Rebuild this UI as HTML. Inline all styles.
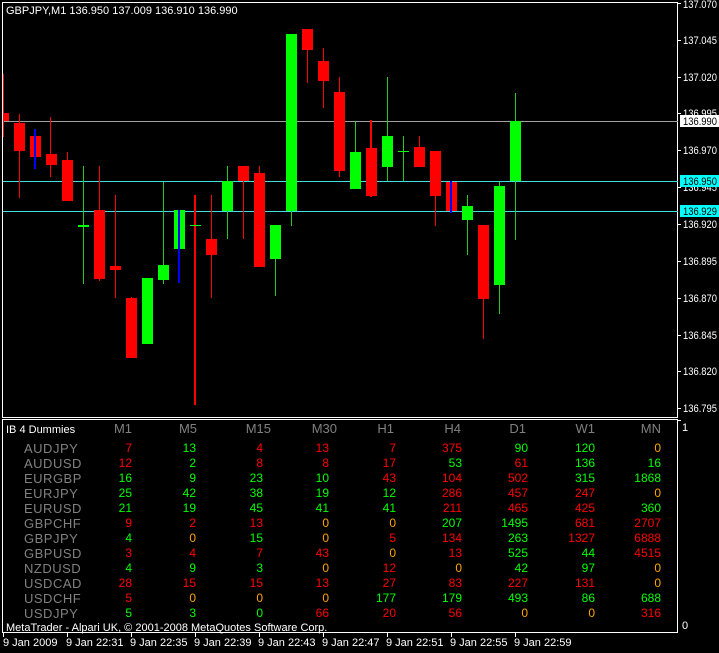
<!DOCTYPE html>
<html><head><meta charset="utf-8"><style>
html,body{margin:0;padding:0;background:#000;width:719px;height:653px;overflow:hidden}
svg{display:block}
text{font-family:"Liberation Sans",sans-serif}
</style></head><body>
<svg width="719" height="653" viewBox="0 0 719 653" xmlns="http://www.w3.org/2000/svg" shape-rendering="crispEdges">
<rect width="719" height="653" fill="#000"/>
<rect x="2.5" y="2.5" width="675" height="415" fill="none" stroke="#fff" stroke-width="1"/>
<rect x="2.5" y="419.5" width="675" height="213" fill="none" stroke="#fff" stroke-width="1"/>
<line x1="3" y1="121.5" x2="678" y2="121.5" stroke="#a0a0a0"/>
<line x1="3" y1="181.5" x2="678" y2="181.5" stroke="#40e0e0"/>
<line x1="3" y1="211.5" x2="678" y2="211.5" stroke="#40e0e0"/>
<g fill="#ff0000">
<rect x="3" y="74" width="1" height="63"/>
<rect x="19" y="114" width="1" height="84"/>
<rect x="50" y="117" width="1" height="60"/>
<rect x="67" y="152" width="1" height="48"/>
<rect x="99" y="166" width="1" height="115"/>
<rect x="115" y="195" width="1" height="103"/>
<rect x="131" y="297" width="1" height="2"/>
<rect x="194" y="195" width="2" height="210"/>
<rect x="211" y="195" width="1" height="103"/>
<rect x="243" y="181" width="1" height="58"/>
<rect x="259" y="166" width="1" height="101"/>
<rect x="307" y="50" width="1" height="33"/>
<rect x="323" y="48" width="1" height="60"/>
<rect x="339" y="77" width="1" height="100"/>
<rect x="370" y="120" width="2" height="77"/>
<rect x="419" y="136" width="1" height="11"/>
<rect x="435" y="196" width="1" height="30"/>
<rect x="483" y="299" width="1" height="40"/>
</g>
<g fill="#22cc22">
<rect x="83" y="166" width="1" height="118"/>
<rect x="163" y="182" width="1" height="102"/>
<rect x="227" y="166" width="1" height="73"/>
<rect x="275" y="259" width="1" height="37"/>
<rect x="291" y="211" width="1" height="15"/>
<rect x="355" y="121" width="1" height="31"/>
<rect x="387" y="77" width="1" height="104"/>
<rect x="403" y="136" width="1" height="45"/>
<rect x="467" y="195" width="1" height="60"/>
<rect x="499" y="182" width="1" height="132"/>
<rect x="515" y="93" width="1" height="147"/>
</g>
<g fill="#ff0000">
<rect x="3" y="113" width="6" height="8"/>
<rect x="14" y="123" width="11" height="28"/>
<rect x="30" y="136" width="11" height="21"/>
<rect x="46" y="154" width="11" height="11"/>
<rect x="62" y="160" width="11" height="41"/>
<rect x="94" y="210" width="11" height="69"/>
<rect x="110" y="266" width="11" height="4"/>
<rect x="126" y="298" width="11" height="60"/>
<rect x="206" y="239" width="11" height="16"/>
<rect x="238" y="166" width="11" height="15"/>
<rect x="254" y="173" width="11" height="94"/>
<rect x="302" y="29" width="11" height="21"/>
<rect x="318" y="61" width="11" height="20"/>
<rect x="334" y="92" width="11" height="79"/>
<rect x="366" y="148" width="11" height="48"/>
<rect x="414" y="147" width="11" height="20"/>
<rect x="430" y="151" width="11" height="45"/>
<rect x="446" y="182" width="11" height="29"/>
<rect x="478" y="225" width="11" height="74"/>
</g>
<g fill="#00ff00">
<rect x="78" y="225" width="11" height="2"/>
<rect x="142" y="278" width="11" height="66"/>
<rect x="158" y="265" width="11" height="15"/>
<rect x="174" y="210" width="11" height="39"/>
<rect x="190" y="225" width="11" height="1"/>
<rect x="222" y="181" width="11" height="30"/>
<rect x="270" y="225" width="11" height="34"/>
<rect x="286" y="34" width="11" height="177"/>
<rect x="350" y="152" width="11" height="37"/>
<rect x="382" y="136" width="11" height="31"/>
<rect x="398" y="151" width="11" height="1"/>
<rect x="462" y="206" width="11" height="14"/>
<rect x="494" y="186" width="11" height="99"/>
<rect x="510" y="121" width="11" height="60"/>
</g>
<g fill="#0000ff">
<rect x="34" y="129" width="2" height="40"/>
<rect x="178" y="210" width="2" height="73"/>
<rect x="450" y="181" width="2" height="32"/>
</g>
<text x="6" y="14" fill="#fff" font-size="11">GBPJPY,M1  136.950 137.009 136.910 136.990</text>
<g fill="#fff" font-size="11">
<rect x="678" y="3" width="3" height="1"/><text x="683" y="8" textLength="34" lengthAdjust="spacingAndGlyphs">137.070</text>
<rect x="678" y="40" width="3" height="1"/><text x="683" y="44" textLength="34" lengthAdjust="spacingAndGlyphs">137.045</text>
<rect x="678" y="77" width="3" height="1"/><text x="683" y="81" textLength="34" lengthAdjust="spacingAndGlyphs">137.020</text>
<rect x="678" y="113" width="3" height="1"/><text x="683" y="117" textLength="34" lengthAdjust="spacingAndGlyphs">136.995</text>
<rect x="678" y="150" width="3" height="1"/><text x="683" y="154" textLength="34" lengthAdjust="spacingAndGlyphs">136.970</text>
<rect x="678" y="187" width="3" height="1"/><text x="683" y="191" textLength="34" lengthAdjust="spacingAndGlyphs">136.945</text>
<rect x="678" y="224" width="3" height="1"/><text x="683" y="228" textLength="34" lengthAdjust="spacingAndGlyphs">136.920</text>
<rect x="678" y="261" width="3" height="1"/><text x="683" y="265" textLength="34" lengthAdjust="spacingAndGlyphs">136.895</text>
<rect x="678" y="298" width="3" height="1"/><text x="683" y="302" textLength="34" lengthAdjust="spacingAndGlyphs">136.870</text>
<rect x="678" y="335" width="3" height="1"/><text x="683" y="339" textLength="34" lengthAdjust="spacingAndGlyphs">136.845</text>
<rect x="678" y="371" width="3" height="1"/><text x="683" y="375" textLength="34" lengthAdjust="spacingAndGlyphs">136.820</text>
<rect x="678" y="408" width="3" height="1"/><text x="683" y="412" textLength="34" lengthAdjust="spacingAndGlyphs">136.795</text>
</g>
<rect x="680" y="115" width="39" height="12" fill="#fff"/><text x="683" y="125" fill="#000" font-size="11" textLength="34" lengthAdjust="spacingAndGlyphs">136.990</text>
<rect x="680" y="175" width="39" height="12" fill="#00ffff"/><text x="683" y="185" fill="#000" font-size="11" textLength="34" lengthAdjust="spacingAndGlyphs">136.950</text>
<rect x="680" y="205" width="39" height="12" fill="#00ffff"/><text x="683" y="215" fill="#000" font-size="11" textLength="34" lengthAdjust="spacingAndGlyphs">136.929</text>
<text x="682" y="431" fill="#fff" font-size="11">1</text>
<text x="682" y="629" fill="#fff" font-size="11">0</text>
<rect x="678" y="420" width="3" height="1" fill="#fff"/>
<text x="6" y="433" fill="#fff" font-size="11">IB 4 Dummies</text>
<g fill="#808080" font-size="13" text-anchor="end">
<text x="132" y="433">M1</text><text x="197" y="433">M5</text><text x="271" y="433">M15</text><text x="337" y="433">M30</text><text x="394" y="433">H1</text><text x="461" y="433">H4</text><text x="526" y="433">D1</text><text x="595" y="433">W1</text><text x="661" y="433">MN</text>
</g>
<g fill="#808080" font-size="13" letter-spacing="0.5">
<text x="24" y="453">AUDJPY</text><text x="24" y="468">AUDUSD</text><text x="24" y="483">EURGBP</text><text x="24" y="498">EURJPY</text><text x="24" y="513">EURUSD</text><text x="24" y="528">GBPCHF</text><text x="24" y="543">GBPJPY</text><text x="24" y="558">GBPUSD</text><text x="24" y="573">NZDUSD</text><text x="24" y="588">USDCAD</text><text x="24" y="603">USDCHF</text><text x="24" y="618">USDJPY</text>
</g>
<g font-size="12" text-anchor="end">
<g transform="translate(0,452)">
<text x="132" fill="#f00">7</text><text x="196" fill="#0f0">13</text><text x="263" fill="#f00">4</text><text x="329" fill="#f00">13</text><text x="396" fill="#f00">7</text><text x="462" fill="#f00">375</text><text x="528" fill="#0f0">90</text><text x="595" fill="#0f0">120</text><text x="661" fill="#ffa500">0</text></g>
<g transform="translate(0,467)">
<text x="132" fill="#f00">12</text><text x="196" fill="#0f0">2</text><text x="263" fill="#f00">8</text><text x="329" fill="#f00">8</text><text x="396" fill="#f00">17</text><text x="462" fill="#0f0">53</text><text x="528" fill="#f00">61</text><text x="595" fill="#0f0">136</text><text x="661" fill="#0f0">16</text></g>
<g transform="translate(0,482)">
<text x="132" fill="#0f0">16</text><text x="196" fill="#0f0">9</text><text x="263" fill="#0f0">23</text><text x="329" fill="#0f0">10</text><text x="396" fill="#f00">43</text><text x="462" fill="#f00">104</text><text x="528" fill="#f00">502</text><text x="595" fill="#0f0">315</text><text x="661" fill="#0f0">1868</text></g>
<g transform="translate(0,497)">
<text x="132" fill="#0f0">25</text><text x="196" fill="#0f0">42</text><text x="263" fill="#0f0">38</text><text x="329" fill="#0f0">19</text><text x="396" fill="#0f0">12</text><text x="462" fill="#f00">286</text><text x="528" fill="#f00">457</text><text x="595" fill="#f00">247</text><text x="661" fill="#ffa500">0</text></g>
<g transform="translate(0,512)">
<text x="132" fill="#0f0">21</text><text x="196" fill="#0f0">19</text><text x="263" fill="#0f0">45</text><text x="329" fill="#0f0">41</text><text x="396" fill="#0f0">41</text><text x="462" fill="#f00">211</text><text x="528" fill="#f00">465</text><text x="595" fill="#f00">425</text><text x="661" fill="#0f0">360</text></g>
<g transform="translate(0,527)">
<text x="132" fill="#f00">9</text><text x="196" fill="#f00">2</text><text x="263" fill="#f00">13</text><text x="329" fill="#ffa500">0</text><text x="396" fill="#ffa500">0</text><text x="462" fill="#0f0">207</text><text x="528" fill="#0f0">1495</text><text x="595" fill="#f00">681</text><text x="661" fill="#f00">2707</text></g>
<g transform="translate(0,542)">
<text x="132" fill="#0f0">4</text><text x="196" fill="#ffa500">0</text><text x="263" fill="#0f0">15</text><text x="329" fill="#ffa500">0</text><text x="396" fill="#f00">5</text><text x="462" fill="#f00">134</text><text x="528" fill="#0f0">263</text><text x="595" fill="#f00">1327</text><text x="661" fill="#f00">6888</text></g>
<g transform="translate(0,557)">
<text x="132" fill="#f00">3</text><text x="196" fill="#f00">4</text><text x="263" fill="#f00">7</text><text x="329" fill="#f00">43</text><text x="396" fill="#ffa500">0</text><text x="462" fill="#f00">13</text><text x="528" fill="#0f0">525</text><text x="595" fill="#0f0">44</text><text x="661" fill="#f00">4515</text></g>
<g transform="translate(0,572)">
<text x="132" fill="#0f0">4</text><text x="196" fill="#0f0">9</text><text x="263" fill="#0f0">3</text><text x="329" fill="#ffa500">0</text><text x="396" fill="#f00">12</text><text x="462" fill="#ffa500">0</text><text x="528" fill="#0f0">42</text><text x="595" fill="#0f0">97</text><text x="661" fill="#ffa500">0</text></g>
<g transform="translate(0,587)">
<text x="132" fill="#f00">28</text><text x="196" fill="#f00">15</text><text x="263" fill="#f00">15</text><text x="329" fill="#f00">13</text><text x="396" fill="#f00">27</text><text x="462" fill="#f00">83</text><text x="528" fill="#f00">227</text><text x="595" fill="#f00">131</text><text x="661" fill="#ffa500">0</text></g>
<g transform="translate(0,602)">
<text x="132" fill="#f00">5</text><text x="196" fill="#ffa500">0</text><text x="263" fill="#ffa500">0</text><text x="329" fill="#ffa500">0</text><text x="396" fill="#0f0">177</text><text x="462" fill="#0f0">179</text><text x="528" fill="#0f0">493</text><text x="595" fill="#0f0">86</text><text x="661" fill="#0f0">688</text></g>
<g transform="translate(0,617)">
<text x="132" fill="#0f0">5</text><text x="196" fill="#0f0">3</text><text x="263" fill="#0f0">0</text><text x="329" fill="#f00">66</text><text x="396" fill="#f00">20</text><text x="462" fill="#f00">56</text><text x="528" fill="#ffa500">0</text><text x="595" fill="#ffa500">0</text><text x="661" fill="#f00">316</text></g>
</g>
<text x="6" y="631" fill="#fff" font-size="11">MetaTrader - Alpari UK, © 2001-2008 MetaQuotes Software Corp.</text>
<g fill="#fff" font-size="11">
<rect x="3" y="633" width="1" height="4"/><text x="3" y="646">9 Jan 2009</text>
<rect x="67" y="633" width="1" height="4"/><text x="66" y="646">9 Jan 22:31</text>
<rect x="131" y="633" width="1" height="4"/><text x="130" y="646">9 Jan 22:35</text>
<rect x="195" y="633" width="1" height="4"/><text x="194" y="646">9 Jan 22:39</text>
<rect x="259" y="633" width="1" height="4"/><text x="258" y="646">9 Jan 22:43</text>
<rect x="323" y="633" width="1" height="4"/><text x="322" y="646">9 Jan 22:47</text>
<rect x="387" y="633" width="1" height="4"/><text x="386" y="646">9 Jan 22:51</text>
<rect x="451" y="633" width="1" height="4"/><text x="450" y="646">9 Jan 22:55</text>
<rect x="515" y="633" width="1" height="4"/><text x="514" y="646">9 Jan 22:59</text>
</g>
</svg>
</body></html>
